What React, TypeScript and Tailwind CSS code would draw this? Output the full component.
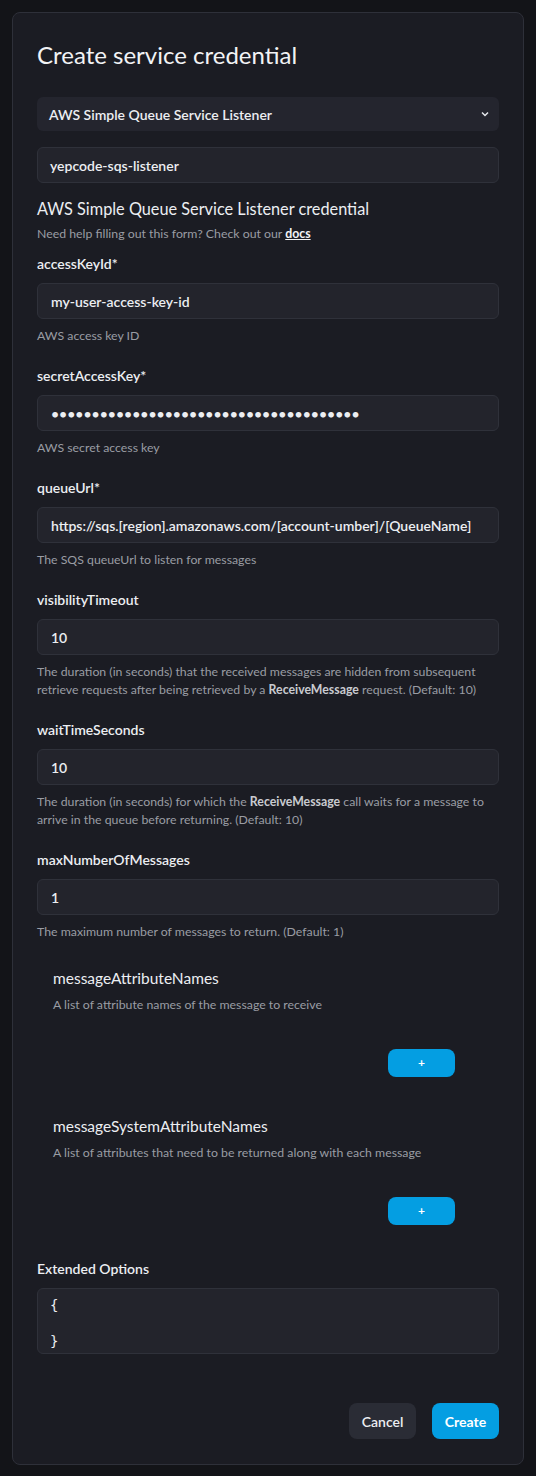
import React from "react";

const FONT = { fontFamily: "'Lato', 'Noto Sans', sans-serif" };

function Field({
  label,
  value,
  help,
}: {
  label: string;
  value: string;
  help: React.ReactNode;
}) {
  return (
    <div className="flex flex-col mb-[21px]">
      <div className="text-[14px] leading-[20px] font-semibold text-[#eceef2]">{label}</div>
      <div className="mt-[9px] h-[36px] rounded-md border border-[#2f313a] bg-[#23242c] px-[13px] flex items-center text-[14px] font-semibold text-[#eceef2]">
        {value}
      </div>
      <div className="mt-[8px] text-[12.3px] leading-[18px] text-[#9a9ca3]">{help}</div>
    </div>
  );
}

function ListField({ title, desc }: { title: string; desc: string }) {
  return (
    <div className="pl-4 pr-[44px] flex flex-col">
      <div className="text-[15.5px] leading-[22px] text-[#eceef2]">{title}</div>
      <div className="mt-[8px] text-[12.3px] leading-[16px] text-[#9a9ca3]">{desc}</div>
      <div className="flex justify-end mt-[36px]">
        <button className="w-[67px] h-[28px] rounded-lg bg-[#049ee2] text-white text-[12px] font-bold leading-none flex items-center justify-center">
          +
        </button>
      </div>
    </div>
  );
}

export default function App() {
  return (
    <div className="min-h-screen bg-[#131418] p-3" style={FONT}>
      <div className="rounded-lg border border-[#2e3039] bg-[#1b1c23] px-[24px] pt-[26px] pb-[25px]">
        <h1 className="text-[24px] leading-[32px] text-[#f2f3f5] font-normal">Create service credential</h1>

        <div className="mt-[26px] h-[34px] rounded-md bg-[#24252e] pl-3 pr-2 flex items-center justify-between text-[14px] font-semibold text-[#eceef2]">
          <span>AWS Simple Queue Service Listener</span>
          <svg width="10" height="10" viewBox="0 0 10 10" className="mr-[1px]">
            <path d="M2 3.5 L5 6.5 L8 3.5" stroke="#e5e7eb" strokeWidth="1.5" fill="none" />
          </svg>
        </div>

        <div className="mt-[16px] h-[36px] rounded-md border border-[#2f313a] bg-[#23242c] px-[12px] flex items-center text-[14px] font-semibold text-[#eceef2]">
          yepcode-sqs-listener
        </div>

        <div className="mt-[14px] text-[16.3px] leading-[24px] text-[#eceef2]">
          AWS Simple Queue Service Listener credential
        </div>
        <div className="mt-[5px] text-[12.3px] leading-[16px] text-[#9a9ca3]">
          Need help filling out this form? Check out our{" "}
          <span className="font-bold text-[#f2f3f5] underline">docs</span>
        </div>

        <div className="mt-[12px]">
          <Field label="accessKeyId*" value="my-user-access-key-id" help="AWS access key ID" />
          <Field
            label="secretAccessKey*"
            value={"••••••••••••••••••••••••••••••••••••••"}
            help="AWS secret access key"
          />
          <Field
            label="queueUrl*"
            value="https://sqs.[region].amazonaws.com/[account-umber]/[QueueName]"
            help="The SQS queueUrl to listen for messages"
          />
          <Field
            label="visibilityTimeout"
            value="10"
            help={
              <>
                The duration (in seconds) that the received messages are hidden from subsequent retrieve requests
                after being retrieved by a <span className="font-bold text-[#c9cbd0]">ReceiveMessage</span> request.
                (Default: 10)
              </>
            }
          />
          <Field
            label="waitTimeSeconds"
            value="10"
            help={
              <>
                The duration (in seconds) for which the{" "}
                <span className="font-bold text-[#c9cbd0]">ReceiveMessage</span> call waits for a message to arrive
                in the queue before returning. (Default: 10)
              </>
            }
          />
          <Field label="maxNumberOfMessages" value="1" help="The maximum number of messages to return. (Default: 1)" />
        </div>

        <div className="mt-[26px] flex flex-col gap-[38px]">
          <ListField title="messageAttributeNames" desc="A list of attribute names of the message to receive" />
          <ListField
            title="messageSystemAttributeNames"
            desc="A list of attributes that need to be returned along with each message"
          />
        </div>

        <div className="mt-[34px] text-[14px] leading-[20px] font-semibold text-[#eceef2]">Extended Options</div>
        <div
          className="mt-[9px] h-[66px] rounded-md border border-[#2f313a] bg-[#23242c] px-[12px] pt-[7px] text-[14px] leading-[18px] text-[#eceef2]"
          style={{ fontFamily: "'DejaVu Sans Mono', monospace" }}
        >
          <div>{"{"}</div>
          <div>&nbsp;</div>
          <div>{"}"}</div>
        </div>

        <div className="mt-[49px] flex justify-end gap-4">
          <button className="w-[67px] h-[36px] rounded-lg bg-[#2a2c35] text-[14px] font-semibold text-[#eceef2]">
            Cancel
          </button>
          <button className="w-[67px] h-[36px] rounded-lg bg-[#049ee2] text-[14px] font-bold text-white">
            Create
          </button>
        </div>
      </div>
    </div>
  );
}
